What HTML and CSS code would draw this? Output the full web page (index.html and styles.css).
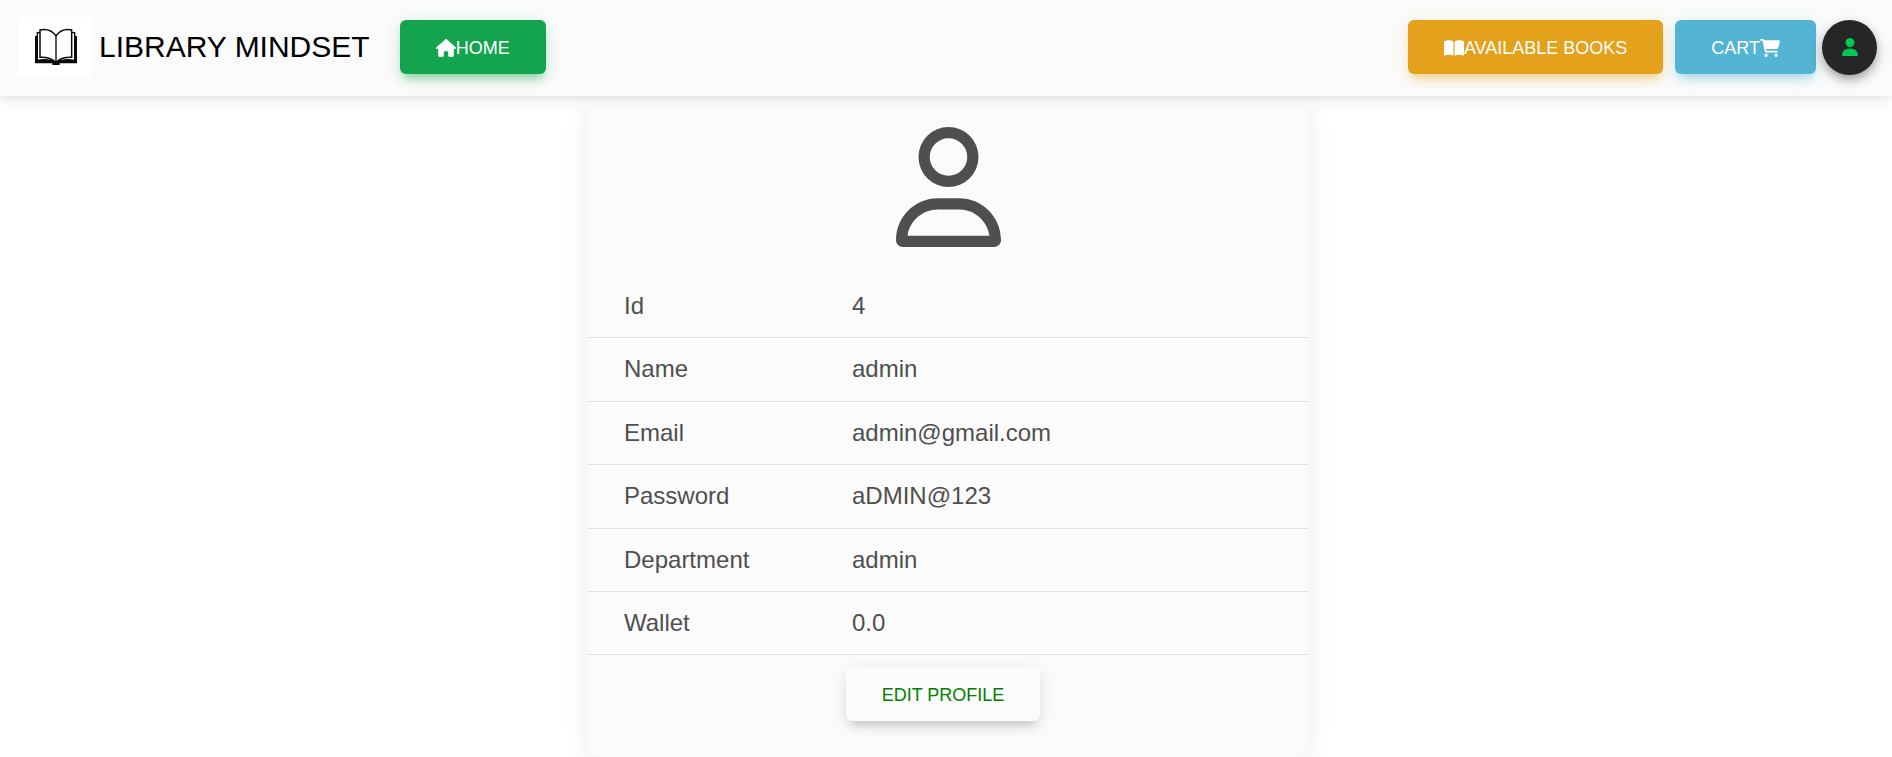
FILE: index.html
```
<!DOCTYPE html>
<html lang="en">
<head>
<meta charset="utf-8">
<title>Library Mindset</title>
<link rel="stylesheet" href="styles.css">
</head>
<body>
<header class="navbar">
  <a class="brand" href="#">
    <svg class="brand-logo" viewBox="0 0 225 180" aria-hidden="true">
      <rect width="225" height="180" fill="#fff"/>
      <path d="M51 57h6v72h50q7 3 14 0h50V57h6v82h-52v5h-22v-5H51z" fill="#0a0a0a"/>
      <path d="M66 47h-8v83M161 47h9v83" fill="none" stroke="#0a0a0a" stroke-width="4"/>
      <path d="M66 39Q95 32 114 56Q133 32 161 39V121Q130 120 114 136Q97 120 66 121z" fill="#fff" stroke="#0a0a0a" stroke-width="4.500"/>
      <path d="M114 56v82" stroke="#0a0a0a" stroke-width="4"/>
      <path d="M58 130Q92 123 110 137M170 130Q136 123 118 137" fill="none" stroke="#0a0a0a" stroke-width="4"/>
    </svg>
    <span>LIBRARY MINDSET</span>
  </a>
  <button class="btn btn-success" type="button"><svg class="icon" viewBox="0 0 576 512" aria-hidden="true"><path d="M575.8 255.5c0 18-15 32.1-32 32.1h-32l.7 160.2c0 2.700-.2 5.400-.5 8.100V472c0 22.100-17.900 40-40 40H456c-1.100 0-2.200 0-3.300-.1c-1.400 .1-2.800 .1-4.200 .1H416 392c-22.100 0-40-17.900-40-40V448 384c0-17.700-14.300-32-32-32H256c-17.700 0-32 14.300-32 32v64 24c0 22.100-17.900 40-40 40H160 128.100c-1.500 0-3-.1-4.500-.2c-1.200 .1-2.400 .2-3.600 .2H104c-22.100 0-40-17.900-40-40V360c0-.9 0-1.900 .1-2.800V287.600H32c-18 0-32-14-32-32.100c0-9 3-17 10-24L266.400 8c7-7 15-8 22-8s15 2 21 7L564.800 231.500c8 7 12 15 11 24z"/></svg>HOME</button>
  <div class="actions">
    <button class="btn btn-warning" type="button"><svg class="icon" viewBox="0 0 576 512" aria-hidden="true"><path d="M249.600 471.500c10.800 3.800 22.400-4.100 22.400-15.500V78.600c0-4.200-1.600-8.400-5-11C247.400 52 202.400 32 144 32C93.500 32 46.300 45.300 18.100 56.100C6.800 60.500 0 71.700 0 83.800V454.100c0 11.900 12.800 20.200 24.100 16.500C55.600 460.100 105.500 448 144 448c33.900 0 79 14 105.600 23.500zm76.800 0C353 462 398.100 448 432 448c38.500 0 88.400 12.100 119.900 22.600c11.300 3.800 24.100-4.600 24.100-16.500V83.800c0-12.100-6.800-23.300-18.100-27.600C529.700 45.300 482.500 32 432 32c-58.400 0-103.400 20-123 35.600c-3.300 2.600-5 6.800-5 11V456c0 11.400 11.700 19.300 22.400 15.500z"/></svg>AVAILABLE BOOKS</button>
    <button class="btn btn-info" type="button">CART<svg class="icon" viewBox="0 0 576 512" aria-hidden="true"><path d="M0 24C0 10.700 10.700 0 24 0H69.500c22 0 41.500 12.800 50.600 32h411c26.300 0 45.500 25 38.600 50.400l-41 152.300c-8.500 31.400-37 53.300-69.500 53.300H170.700l5.400 28.500c2.200 11.300 12.100 19.500 23.600 19.500H488c13.300 0 24 10.700 24 24s-10.700 24-24 24H199.700c-34.600 0-64.300-24.600-70.700-58.500L77.400 54.500c-.7-3.800-4-6.500-7.900-6.500H24C10.700 48 0 37.300 0 24zM128 464a48 48 0 1 1 96 0 48 48 0 1 1 -96 0zm336-48a48 48 0 1 1 0 96 48 48 0 1 1 0-96z"/></svg></button>
    <button class="btn-avatar" type="button" aria-label="Profile"><svg class="icon-user" viewBox="0 0 448 512" aria-hidden="true"><path d="M224 256A128 128 0 1 0 224 0a128 128 0 1 0 0 256zm-45.700 48C79.800 304 0 383.800 0 482.300C0 498.700 13.300 512 29.700 512H418.300c16.400 0 29.700-13.300 29.700-29.700C448 383.800 368.200 304 269.700 304H178.300z"/></svg></button>
  </div>
</header>
<main class="page">
  <section class="card">
    <svg class="portrait" viewBox="0 0 448 512" aria-hidden="true"><path d="M304 128a80 80 0 1 0 -160 0 80 80 0 1 0 160 0zM96 128a128 128 0 1 1 256 0A128 128 0 1 1 96 128zM49.300 464H398.700c-8.900-63.300-63.300-112-129-112H178.300c-65.700 0-120.100 48.700-129 112zM0 482.300C0 383.800 79.800 304 178.300 304h91.400C368.200 304 448 383.800 448 482.300c0 16.400-13.300 29.700-29.700 29.700H29.700C13.300 512 0 498.700 0 482.300z"/></svg>
    <table class="details">
      <tbody>
        <tr><th scope="row">Id</th><td>4</td></tr>
        <tr><th scope="row">Name</th><td>admin</td></tr>
        <tr><th scope="row">Email</th><td>admin@gmail.com</td></tr>
        <tr><th scope="row">Password</th><td>aDMIN@123</td></tr>
        <tr><th scope="row">Department</th><td>admin</td></tr>
        <tr><th scope="row">Wallet</th><td>0.0</td></tr>
      </tbody>
    </table>
    <div class="card-actions">
      <button class="btn btn-light" type="button">EDIT PROFILE</button>
    </div>
  </section>
</main>
</body>
</html>
```

FILE: styles.css
```
* {
  box-sizing: border-box;
}

body {
  margin: 0;
  background: #fff;
  color: #4f4f4f;
  font-family: Arial, "Liberation Sans", sans-serif;
  font-size: 18px;
}

.navbar {
  position: relative;
  z-index: 1;
  display: flex;
  align-items: center;
  padding: 17px 15px 19px 18px;
  background: #fbfbfb;
  box-shadow: 0 5px 14px rgba(0, 0, 0, 0.07), 0 2px 5px rgba(0, 0, 0, 0.05);
}

.brand {
  display: flex;
  align-items: center;
  gap: 6px;
  margin-right: 30px;
  color: #000;
  font-size: 30px;
  text-decoration: none;
  white-space: nowrap;
}

.brand-logo {
  width: 75px;
  height: 60px;
}

.actions {
  display: flex;
  align-items: center;
  margin-left: auto;
}

.btn {
  display: inline-flex;
  align-items: center;
  justify-content: center;
  height: 54px;
  padding: 2px 36px 0;
  border: 0;
  border-radius: 6px;
  color: #fff;
  font: inherit;
  white-space: nowrap;
  cursor: pointer;
}

.icon {
  width: 20px;
  height: 18px;
  fill: currentColor;
}

.btn-success {
  background: #14a44d;
  box-shadow: 0 8px 9px -4px rgba(20, 164, 77, 0.4), 0 4px 18px rgba(20, 164, 77, 0.2);
}

.btn-warning {
  margin-right: 12px;
  background: #e4a11b;
  box-shadow: 0 8px 9px -4px rgba(228, 161, 27, 0.4), 0 4px 18px rgba(228, 161, 27, 0.2);
}

.btn-info {
  margin-right: 6px;
  background: #54b4d3;
  box-shadow: 0 8px 9px -4px rgba(84, 180, 211, 0.4), 0 4px 18px rgba(84, 180, 211, 0.2);
}

.btn-avatar {
  display: flex;
  align-items: center;
  justify-content: center;
  width: 55px;
  height: 55px;
  padding: 0;
  border: 0;
  border-radius: 50%;
  background: #262626;
  color: #00c851;
  box-shadow: 0 5px 11px -2px rgba(0, 0, 0, 0.4), 0 4px 18px rgba(0, 0, 0, 0.1);
  cursor: pointer;
}

.icon-user {
  width: 16px;
  height: 18px;
  fill: currentColor;
}

.page {
  display: flex;
  justify-content: center;
  padding-left: 4px;
}

.card {
  width: 100%;
  max-width: 720px;
  padding: 31px 0 36px;
  border-radius: 12px;
  background: #fbfbfb;
  box-shadow: 0 2px 30px rgba(0, 0, 0, 0.06), 0 12px 24px -2px rgba(0, 0, 0, 0.03);
}

.portrait {
  display: block;
  width: 105px;
  height: 120px;
  margin: 0 auto 28px;
  fill: #4f4f4f;
}

.details {
  width: 100%;
  border-collapse: separate;
  border-spacing: 0;
  table-layout: fixed;
  font-size: 24px;
  line-height: 1.6;
}

.details th,
.details td {
  padding: 12px 36px;
  border-bottom: 1px solid #e0e0e0;
  font-weight: 400;
  text-align: left;
}

.details th {
  width: 228px;
}

.card-actions {
  display: flex;
  justify-content: center;
  padding: 12px 10px 0 0;
}

.btn-light {
  background: #fbfbfb;
  color: #008000;
  box-shadow: 0 8px 9px -4px rgba(0, 0, 0, 0.15), 0 4px 18px rgba(0, 0, 0, 0.1);
}
```
